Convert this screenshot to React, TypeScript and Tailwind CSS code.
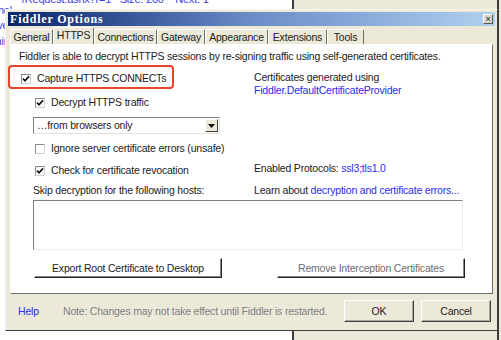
import React from "react";

const tabs = [
  { label: "General", w: "w-[43px]" },
  { label: "HTTPS", w: "w-[41px]", active: true },
  { label: "Connections", w: "w-[63px]" },
  { label: "Gateway", w: "w-[48px]" },
  { label: "Appearance", w: "w-[63px]" },
  { label: "Extensions", w: "w-[59px]" },
  { label: "Tools", w: "w-[37px]" },
];

const Check: React.FC<{ checked?: boolean }> = ({ checked }) => (
  <span className="flex h-[10px] w-[10px] shrink-0 items-center justify-center border border-[#8d8d8d] border-b-[#d0d0d0] border-r-[#d0d0d0] bg-white">
    {checked && (
      <svg width="8" height="8" viewBox="0 0 8 8">
        <path d="M1 3.6 L3 5.8 L7 1.4" stroke="#111" strokeWidth="1.7" fill="none" />
      </svg>
    )}
  </span>
);

const CheckRow: React.FC<{ checked?: boolean; label: string; className?: string }> = ({
  checked,
  label,
  className = "",
}) => (
  <div className={`flex h-[13px] items-center gap-[6px] ${className}`}>
    <Check checked={checked} />
    <span>{label}</span>
  </div>
);

export default function App() {
  return (
    <div className="relative h-[340px] w-[501px] overflow-hidden bg-white text-[10.5px] leading-[13px] tracking-[-0.2px] text-[#222] font-['Liberation_Sans',Arial,sans-serif]">
      {/* background window */}
      <div className="absolute inset-y-0 left-[292px] right-0 border-l-2 border-[#3c3c3c] bg-[#ece9d8]" />
      <div className="absolute inset-y-0 left-[497px] w-[2px] bg-[#3c3c3c]" />
      <div className="absolute left-[20px] top-[-7px] whitespace-nowrap text-[11px] text-[#3b3bf0]">
        '/Request.ashx?r=1&nbsp;&nbsp;&nbsp;Size: 200&nbsp;&nbsp;&nbsp;&nbsp;Next: 1
      </div>
      <div className="absolute left-[-38px] top-[3px] flex w-[50px] flex-col items-end text-[11px] text-[#3b3bf0]">
        <span className="leading-[14px]">Tunnel</span>
        <span className="mt-[1px] leading-[14px]">Server</span>
        <span className="mt-[2px] leading-[14px]">Admini</span>
      </div>

      {/* dialog */}
      <div className="absolute left-[5px] top-[9px] flex h-[322px] w-[493px] flex-col border border-[#f7f6f1] border-b-[#3f3f3f] border-r-[#3f3f3f] bg-[#ece9d8] p-[2px]">
        <div className="flex h-[14px] shrink-0 items-center justify-between bg-gradient-to-r from-[#0a246a] via-[#6a8cc8] to-[#b0d0ee] pl-[2px] pr-[2px]">
          <span className="text-[12px] font-bold tracking-[0.8px] text-white font-['Liberation_Serif',serif]">
            Fiddler Options
          </span>
          <span className="flex h-[10px] w-[10px] items-center justify-center border border-[#fff] border-b-[#555] border-r-[#555] bg-[#d8d6cc] text-[9px] leading-none text-[#222]">
            ×
          </span>
        </div>

        {/* tabs */}
        <div className="mt-[1px] flex h-[17px] items-end pl-[2px]">
          {tabs.map((t) => (
            <div
              key={t.label}
              className={`${t.w} flex items-center justify-center rounded-t-[2px] border-l border-t border-r border-[#fff] border-r-[#6f6d64] bg-[#ece9d8] ${
                t.active ? "h-[17px] pb-[1px]" : "h-[15px] pt-[1px]"
              }`}
            >
              {t.label}
            </div>
          ))}
        </div>

        {/* panel */}
        <div className="ml-[2px] flex h-[250px] w-[483px] flex-col border border-[#fff] border-b-[#6f6d64] border-r-[#6f6d64] bg-white">
          <div className="ml-[8px] mt-[5px]">
            Fiddler is able to decrypt HTTPS sessions by re-signing traffic using self-generated certificates.
          </div>

          <div className="ml-[10px] mt-[8px] flex">
            <div className="flex w-[233px] flex-col">
              <CheckRow checked label="Capture HTTPS CONNECTs" className="mt-[1px]" />
              <CheckRow checked label="Decrypt HTTPS traffic" className="ml-[14px] mt-[11px]" />
              <div className="ml-[12px] mt-[8px] flex h-[17px] w-[187px] items-center border border-[#7f7f7f] border-b-[#e4e2d8] border-r-[#e4e2d8] bg-white pl-[3px]">
                <span className="flex-1">…from browsers only</span>
                <span className="mr-[1px] flex h-[13px] w-[13px] items-center justify-center border border-[#fff] border-b-[#404040] border-r-[#404040] bg-[#ece9d8]">
                  <svg width="7" height="4" viewBox="0 0 7 4">
                    <path d="M0 0 H7 L3.5 4 Z" fill="#111" />
                  </svg>
                </span>
              </div>
              <CheckRow label="Ignore server certificate errors (unsafe)" className="ml-[14px] mt-[8px]" />
              <CheckRow checked label="Check for certificate revocation" className="ml-[14px] mt-[9px]" />
              <div className="ml-[12px] mt-[7px]">Skip decryption for the following hosts:</div>
            </div>
            <div className="flex flex-col">
              <span>Certificates generated using</span>
              <span className="text-[#2a2aee]">Fiddler.DefaultCertificateProvider</span>
              <span className="mt-[65px]">
                Enabled Protocols: <span className="text-[#2a2aee]">ssl3;tls1.0</span>
              </span>
              <span className="mt-[9px]">
                Learn about <span className="text-[#2a2aee]">decryption and certificate errors...</span>
              </span>
            </div>
          </div>

          <div className="ml-[22px] mt-[3px] h-[50px] w-[430px] border border-[#7f7f7f] border-b-[#eeede6] border-r-[#eeede6] bg-white" />

          <div className="ml-[23px] mt-[8px] flex gap-[55px]">
            <div className="flex h-[20px] w-[188px] items-center justify-center border border-[#fff] border-b-[#222] border-r-[#222] bg-white shadow-[inset_-1px_-1px_0_#8a887e]">
              Export Root Certificate to Desktop
            </div>
            <div className="flex h-[20px] w-[188px] items-center justify-center border border-[#fff] border-b-[#222] border-r-[#222] bg-white text-[#6d6d6d] shadow-[inset_-1px_-1px_0_#8a887e]">
              Remove Interception Certificates
            </div>
          </div>
        </div>

        {/* footer */}
        <div className="flex flex-1 items-center pl-[10px]">
          <span className="w-[45px] text-[#2a2aee]">Help</span>
          <span className="text-[#808080]">Note: Changes may not take effect until Fiddler is restarted.</span>
          <div className="ml-auto mr-[4px] flex gap-[7px]">
            <div className="flex h-[22px] w-[70px] items-center justify-center border border-[#fff] border-b-[#404040] border-r-[#404040] bg-[#ece9d8] shadow-[inset_-1px_-1px_0_#aca899]">
              OK
            </div>
            <div className="flex h-[22px] w-[70px] items-center justify-center border border-[#fff] border-b-[#404040] border-r-[#404040] bg-[#ece9d8] shadow-[inset_-1px_-1px_0_#aca899]">
              Cancel
            </div>
          </div>
        </div>
      </div>

      {/* highlight annotation */}
      <div className="absolute left-[8px] top-[65px] h-[24px] w-[166px] rounded-[4px] border-2 border-[#e5452b]" />
    </div>
  );
}
